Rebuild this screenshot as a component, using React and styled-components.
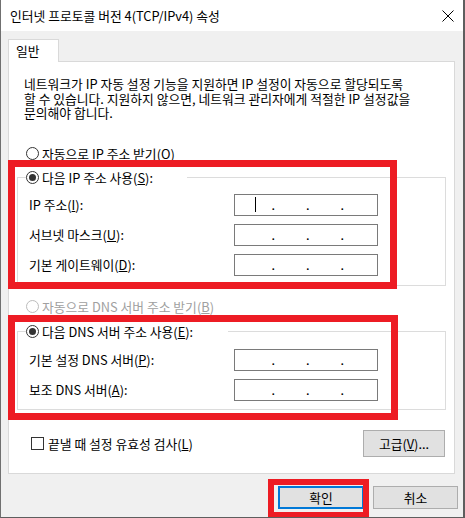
import React from "react";
import styled, { createGlobalStyle } from "styled-components";

const Global = createGlobalStyle`
  html, body {
    margin: 0;
    padding: 0;
    background: #fff;
  }
  body {
    font-family: "Noto Sans CJK KR", "Noto Sans", sans-serif;
    font-size: 12.8px;
    color: #000;
  }
`;

const Window = styled.div`
  position: relative;
  width: 465px;
  height: 518px;
  box-sizing: border-box;
  background: #f0f0f0;
  border-left: 1px solid #707070;
  border-right: 2px solid #5e5e5e;
  border-bottom: 1px solid #5e5e5e;
  display: flex;
  flex-direction: column;
  overflow: hidden;
`;

const TitleBar = styled.div`
  height: 31px;
  flex: none;
  background: #fff;
  display: flex;
  align-items: center;
  padding-left: 9px;
`;

const Title = styled.div`
  flex: 1;
  line-height: 16px;
`;

const CloseBtn = styled.div`
  width: 30px;
  height: 31px;
  display: flex;
  align-items: center;
  justify-content: center;
`;

const Body = styled.div`
  padding: 8px 0 0 7px;
  display: flex;
  flex-direction: column;
`;

const TabStrip = styled.div`
  display: flex;
  height: 22px;
`;

const Tab = styled.div`
  width: 51px;
  height: 23px;
  box-sizing: border-box;
  background: #fff;
  border: 1px solid #d9d9d9;
  border-bottom: none;
  padding-left: 7px;
  line-height: 21px;
  position: relative;
  z-index: 1;
`;

const Panel = styled.div`
  width: 447px;
  height: 413px;
  box-sizing: border-box;
  background: #fff;
  border: 1px solid #d9d9d9;
  display: flex;
  flex-direction: column;
`;

const Description = styled.p`
  margin: 15px 0 0 15px;
  line-height: 14.5px;
  white-space: nowrap;
`;

const RadioRow = styled.label`
  display: flex;
  align-items: center;
  height: 16px;
  margin-left: ${(p) => p.$indent || 0}px;
  margin-top: ${(p) => p.$top || 0}px;
  color: ${(p) => (p.$disabled ? "#a0a0a0" : "#000")};
  white-space: nowrap;
`;

const RadioCircle = styled.span`
  width: 13px;
  height: 13px;
  box-sizing: border-box;
  border-radius: 50%;
  border: 1px solid ${(p) => (p.$disabled ? "#bcbcbc" : "#333")};
  background: #fff;
  display: flex;
  align-items: center;
  justify-content: center;
  margin-right: 3px;
  flex: none;
  &::after {
    content: "";
    width: 7px;
    height: 7px;
    border-radius: 50%;
    background: #333;
    display: ${(p) => (p.$checked ? "block" : "none")};
  }
`;

const Group = styled.fieldset`
  margin: ${(p) => p.$top}px 8px 0 8px;
  padding: ${(p) => p.$padTop}px 0 ${(p) => p.$padBottom}px 11px;
  border: 1px solid #dcdcdc;
  min-width: 0;
`;

const Legend = styled.legend`
  margin-left: -3px;
  padding: 0;
  width: ${(p) => p.$width}px;
`;

const FieldRow = styled.div`
  display: flex;
  align-items: center;
  height: 22px;
  & + & {
    margin-top: 8px;
  }
`;

const FieldLabel = styled.span`
  width: 205px;
  flex: none;
`;

const IpBox = styled.div`
  width: 144px;
  height: 22px;
  box-sizing: border-box;
  border: 1px solid #7a7a7a;
  display: flex;
  align-items: center;
  padding-left: 5px;
`;

const Octet = styled.span`
  width: 31.5px;
  height: 20px;
  display: flex;
  align-items: center;
  justify-content: center;
`;

const Dot = styled.span`
  width: 3px;
  text-align: center;
  line-height: 20px;
  padding-top: 1px;
`;

const Caret = styled.span`
  width: 1px;
  height: 15px;
  background: #000;
`;

const Footer = styled.div`
  display: flex;
  align-items: center;
  margin: 20px 9px 0 22px;
`;

const CheckRow = styled.label`
  flex: 1;
  display: flex;
  align-items: center;
`;

const CheckBox = styled.span`
  width: 13px;
  height: 13px;
  box-sizing: border-box;
  border: 1px solid #333;
  background: #fff;
  margin-right: 4px;
`;

const Button = styled.div`
  width: ${(p) => p.$w}px;
  height: ${(p) => p.$h}px;
  box-sizing: border-box;
  background: #e1e1e1;
  border: ${(p) => (p.$default ? "2px solid #0078d7" : "1px solid #adadad")};
  display: flex;
  align-items: center;
  justify-content: center;
`;

const ButtonBar = styled.div`
  display: flex;
  justify-content: flex-end;
  gap: 9px;
  margin-top: 12px;
  padding-right: 5px;
`;

const Mark = styled.div`
  position: absolute;
  left: ${(p) => p.$x - 1}px;
  top: ${(p) => p.$y}px;
  width: ${(p) => p.$w}px;
  height: ${(p) => p.$h}px;
  box-sizing: border-box;
  border: ${(p) => p.$t}px solid #ed1c24;
  pointer-events: none;
`;

const Radio = ({ checked, disabled, indent, top, children }) => (
  <RadioRow $indent={indent} $top={top} $disabled={disabled}>
    <RadioCircle $checked={checked} $disabled={disabled} />
    <span>{children}</span>
  </RadioRow>
);

const IpField = ({ focused }) => (
  <IpBox>
    <Octet>{focused && <Caret />}</Octet>
    <Dot>.</Dot>
    <Octet />
    <Dot>.</Dot>
    <Octet />
    <Dot>.</Dot>
    <Octet />
  </IpBox>
);

const Field = ({ label, focused }) => (
  <FieldRow>
    <FieldLabel>{label}</FieldLabel>
    <IpField focused={focused} />
  </FieldRow>
);

export default function App() {
  return (
    <>
      <Global />
      <Window>
        <TitleBar>
          <Title>인터넷 프로토콜 버전 4(TCP/IPv4) 속성</Title>
          <CloseBtn>
            <svg width="12" height="12" viewBox="0 0 12 12">
              <path d="M0.5 0.5 L11.5 11.5 M11.5 0.5 L0.5 11.5" stroke="#000" strokeWidth="1" />
            </svg>
          </CloseBtn>
        </TitleBar>
        <Body>
          <TabStrip>
            <Tab>일반</Tab>
          </TabStrip>
          <Panel>
            <Description>
              네트워크가 IP 자동 설정 기능을 지원하면 IP 설정이 자동으로 할당되도록
              <br />
              할 수 있습니다. 지원하지 않으면, 네트워크 관리자에게 적절한 IP 설정값을
              <br />
              문의해야 합니다.
            </Description>
            <Radio indent={17} top={25}>
              자동으로 IP 주소 받기(<u>O</u>)
            </Radio>
            <Group $top={8} $padTop={8} $padBottom={9}>
              <Legend $width={161}>
                <Radio checked>
                  다음 IP 주소 사용(<u>S</u>):
                </Radio>
              </Legend>
              <Field label={<>IP 주소(<u>I</u>):</>} focused />
              <Field label={<>서브넷 마스크(<u>U</u>):</>} />
              <Field label={<>기본 게이트웨이(<u>D</u>):</>} />
            </Group>
            <Radio indent={17} top={13} disabled>
              자동으로 DNS 서버 주소 받기(<u>B</u>)
            </Radio>
            <Group $top={9} $padTop={9} $padBottom={8}>
              <Legend $width={202}>
                <Radio checked>
                  다음 DNS 서버 주소 사용(<u>E</u>):
                </Radio>
              </Legend>
              <Field label={<>기본 설정 DNS 서버(<u>P</u>):</>} />
              <Field label={<>보조 DNS 서버(<u>A</u>):</>} />
            </Group>
            <Footer>
              <CheckRow>
                <CheckBox />
                <span>
                  끝낼 때 설정 유효성 검사(<u>L</u>)
                </span>
              </CheckRow>
              <Button $w={82} $h={27}>
                고급(<u>V</u>)...
              </Button>
            </Footer>
          </Panel>
          <ButtonBar>
            <Button $w={86} $h={23} $default>
              확인
            </Button>
            <Button $w={85} $h={23}>
              취소
            </Button>
          </ButtonBar>
        </Body>
        <Mark $x={8} $y={160} $w={389} $h={129} $t={7} />
        <Mark $x={8} $y={315} $w={390} $h={105} $t={7} />
        <Mark $x={268} $y={479} $w={101} $h={39} $t={6} />
      </Window>
    </>
  );
}
